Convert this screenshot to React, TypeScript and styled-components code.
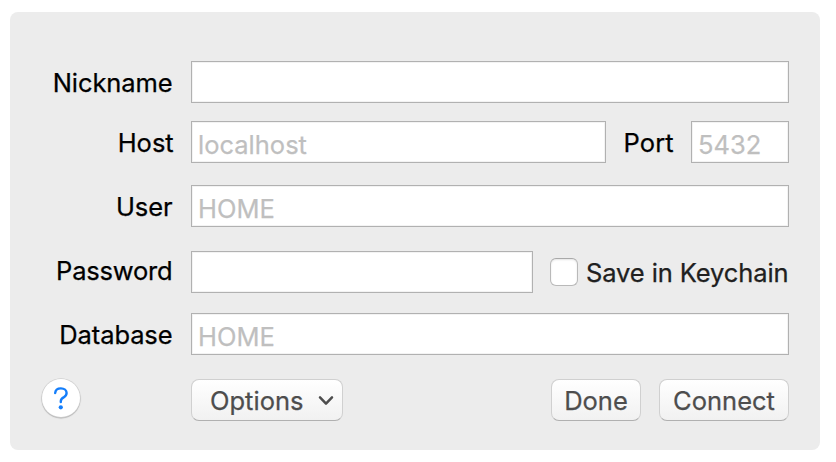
import React from "react";
import styled, { createGlobalStyle } from "styled-components";

const GlobalStyle = createGlobalStyle`
  html, body { margin: 0; background: #fff; }
  *, *::before, *::after { box-sizing: border-box; }
  body, input, button {
    font-family: Inter, "Liberation Sans", sans-serif;
    font-size: 25.5px;
    font-weight: 400;
    -webkit-text-stroke: 0.25px currentColor;
  }
`;

const Page = styled.main`
  width: 836px;
  height: 462px;
  padding: 12px 16px 12px 10px;
  overflow: hidden;
`;

const Panel = styled.form`
  height: 438px;
  padding: 49px 31px 0;
  border-radius: 8px;
  background: #ececec;
`;

const Row = styled.div<{ $gap: number }>`
  display: flex;
  height: 42px;
  margin-bottom: ${(p) => p.$gap}px;
`;

const Label = styled.label<{ $shift?: number; $end?: number; $track?: number }>`
  width: 150px;
  flex: none;
  padding-right: ${(p) => p.$end ?? 18.5}px;
  margin-top: ${(p) => p.$shift ?? 0}px;
  line-height: 44px;
  height: 44px;
  text-align: right;
  white-space: nowrap;
  color: #000;
  letter-spacing: ${(p) => p.$track ?? -0.1}px;
`;

const PortLabel = styled(Label)`
  width: 85px;
`;

const Field = styled.input`
  flex: 1;
  min-width: 0;
  height: 42px;
  margin: 0;
  padding: 5px 6px 0;
  border: 1px solid #b1b1b1;
  border-radius: 0;
  outline: none;
  background: #fff;
  box-shadow: inset 0 0 0 1px #f3f3f3;
  &::placeholder { color: #bfbfbf; opacity: 1; }
`;

const PortField = styled(Field)`
  flex: none;
  width: 98px;
`;

const PasswordField = styled(Field)`
  flex: none;
  width: 342px;
`;

const CheckLabel = styled.label`
  display: flex;
  align-items: flex-start;
  margin-left: 17px;
  height: 44px;
  line-height: 44px;
  white-space: nowrap;
  color: #202020;
  letter-spacing: -0.1px;
`;

const Checkbox = styled.input`
  appearance: none;
  flex: none;
  width: 28px;
  height: 28px;
  margin: 7px 8px 0 0;
  border: 1px solid #b9b9b9;
  border-top-color: #a9a9a9;
  border-radius: 6px;
  background: #fff;
  box-shadow: inset 0 1px 2px #e4e4e4;
`;

const Actions = styled.div`
  display: flex;
  height: 42px;
`;

const Help = styled.button`
  width: 38px;
  height: 38px;
  margin: 0 111px 0 1px;
  padding: 0;
  display: flex;
  align-items: center;
  justify-content: center;
  border: 0;
  border-radius: 50%;
  background: #fff;
  box-shadow: 0 0 0 0.7px #cfcfcf, 0 1px 1px 0.5px #b0b0b0;
`;

const Button = styled.button<{ $width: number }>`
  width: ${(p) => p.$width}px;
  height: 42px;
  padding: 0;
  display: flex;
  align-items: center;
  justify-content: center;
  border: 1px solid #d0d0d0;
  border-bottom-color: #b0b0b0;
  border-radius: 8px;
  background: linear-gradient(#fff, #f1f1f1);
  color: #4d4d4d;
  white-space: nowrap;
`;

const MenuButton = styled(Button)`
  padding-left: 18px;
  justify-content: flex-start;
`;

const Chevron = styled.svg`
  margin: 0 8px 0 auto;
`;

const EndButtons = styled.div`
  display: flex;
  gap: 18px;
  margin-left: auto;
`;

export default function App() {
  return (
    <>
      <GlobalStyle />
      <Page>
        <Panel onSubmit={(e: React.FormEvent) => e.preventDefault()}>
          <Row $gap={18}>
            <Label htmlFor="nickname">Nickname</Label>
            <Field id="nickname" />
          </Row>
          <Row $gap={22}>
            <Label htmlFor="host" $end={17.3} $track={0}>Host</Label>
            <Field id="host" placeholder="localhost" />
            <PortLabel htmlFor="port" $end={17.3} $track={0.1}>Port</PortLabel>
            <PortField id="port" placeholder="5432" />
          </Row>
          <Row $gap={24}>
            <Label htmlFor="user">User</Label>
            <Field id="user" placeholder="HOME" />
          </Row>
          <Row $gap={20}>
            <Label htmlFor="password" $shift={-2} $track={-0.2}>Password</Label>
            <PasswordField id="password" type="password" />
            <CheckLabel>
              <Checkbox type="checkbox" />
              Save in Keychain
            </CheckLabel>
          </Row>
          <Row $gap={24}>
            <Label htmlFor="database">Database</Label>
            <Field id="database" placeholder="HOME" />
          </Row>
          <Actions>
            <Help type="button" aria-label="Help">
              <svg width="16" height="24" viewBox="0 0 16 24" fill="none">
                <path d="M2.2 7C2.4 4 4.7 2.4 7.9 2.4C11.2 2.4 13.6 4.2 13.6 7C13.6 9 12.5 10.2 10.6 11.4C8.6 12.6 7.8 13.5 7.8 15.2V16" stroke="#147efb" strokeWidth="2.4" strokeLinecap="round" />
                <circle cx="7.8" cy="21.3" r="2.1" fill="#147efb" />
              </svg>
            </Help>
            <MenuButton type="button" $width={152}>
              Options
              <Chevron width="16" height="11" viewBox="0 0 16 11" fill="none">
                <path d="M2 2.4L8 8.6L14 2.4" stroke="#4d4d4d" strokeWidth="2.5" strokeLinecap="round" strokeLinejoin="round" />
              </Chevron>
            </MenuButton>
            <EndButtons>
              <Button type="button" $width={90}>Done</Button>
              <Button type="submit" $width={130}>Connect</Button>
            </EndButtons>
          </Actions>
        </Panel>
      </Page>
    </>
  );
}
